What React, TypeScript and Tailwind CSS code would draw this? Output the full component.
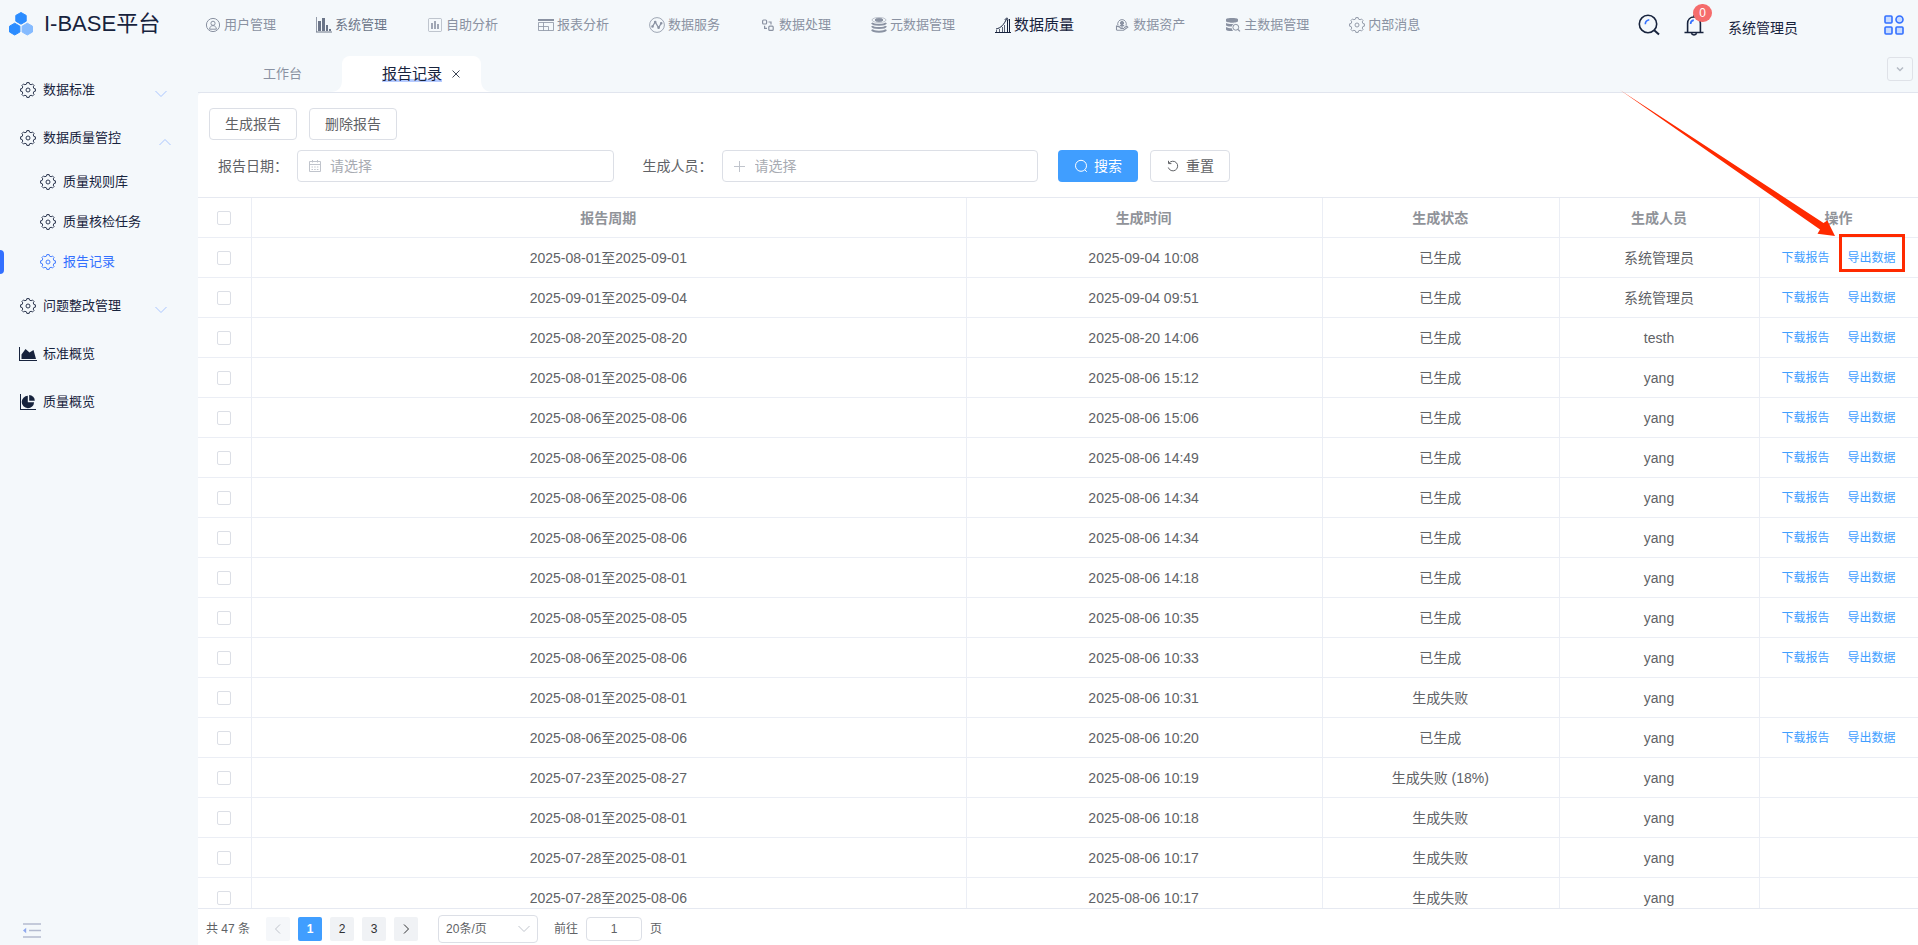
import React, { useState } from 'react';

interface IconProps {
  className?: string;
}

interface Report {
  period: string;
  time: string;
  status: string;
  user: string;
}

const REPORTS: Report[] = [
  { period: '2025-08-01至2025-09-01', time: '2025-09-04 10:08', status: '已生成', user: '系统管理员' },
  { period: '2025-09-01至2025-09-04', time: '2025-09-04 09:51', status: '已生成', user: '系统管理员' },
  { period: '2025-08-20至2025-08-20', time: '2025-08-20 14:06', status: '已生成', user: 'testh' },
  { period: '2025-08-01至2025-08-06', time: '2025-08-06 15:12', status: '已生成', user: 'yang' },
  { period: '2025-08-06至2025-08-06', time: '2025-08-06 15:06', status: '已生成', user: 'yang' },
  { period: '2025-08-06至2025-08-06', time: '2025-08-06 14:49', status: '已生成', user: 'yang' },
  { period: '2025-08-06至2025-08-06', time: '2025-08-06 14:34', status: '已生成', user: 'yang' },
  { period: '2025-08-06至2025-08-06', time: '2025-08-06 14:34', status: '已生成', user: 'yang' },
  { period: '2025-08-01至2025-08-01', time: '2025-08-06 14:18', status: '已生成', user: 'yang' },
  { period: '2025-08-05至2025-08-05', time: '2025-08-06 10:35', status: '已生成', user: 'yang' },
  { period: '2025-08-06至2025-08-06', time: '2025-08-06 10:33', status: '已生成', user: 'yang' },
  { period: '2025-08-01至2025-08-01', time: '2025-08-06 10:31', status: '生成失败', user: 'yang' },
  { period: '2025-08-06至2025-08-06', time: '2025-08-06 10:20', status: '已生成', user: 'yang' },
  { period: '2025-07-23至2025-08-27', time: '2025-08-06 10:19', status: '生成失败 (18%)', user: 'yang' },
  { period: '2025-08-01至2025-08-01', time: '2025-08-06 10:18', status: '生成失败', user: 'yang' },
  { period: '2025-07-28至2025-08-01', time: '2025-08-06 10:17', status: '生成失败', user: 'yang' },
  { period: '2025-07-28至2025-08-06', time: '2025-08-06 10:17', status: '生成失败', user: 'yang' },
];

// 8-tooth gear outline in a 16x16 box
const gearPath = () => {
  const pts: string[] = [];
  for (let i = 0; i < 8; i++) {
    [[-14, 6.1], [-9, 7.5], [9, 7.5], [14, 6.1]].forEach(([offset, r]) => {
      const a = ((i * 45 + offset) * Math.PI) / 180;
      pts.push(`${(8 + r * Math.sin(a)).toFixed(2)} ${(8 - r * Math.cos(a)).toFixed(2)}`);
    });
  }
  return `M${pts.join('L')}Z`;
};
const GEAR = gearPath();

const GearIcon: React.FC<IconProps> = ({ className = '' }) => (
  <svg className={`w-4 h-4 shrink-0 ${className}`} viewBox="0 0 16 16" fill="none" stroke="currentColor" strokeWidth=".9" strokeLinejoin="round">
    <path d={GEAR} />
    <circle cx="8" cy="8" r="2" />
  </svg>
);

const UserIcon = () => (
  <svg className="w-4 h-4" viewBox="0 0 16 16" fill="none" stroke="currentColor">
    <circle cx="8" cy="8" r="6.600" />
    <circle cx="8" cy="6.300" r="2.100" />
    <path d="M4.600 12.200c.2-2.300 1.500-3.600 3.400-3.600s3.200 1.300 3.400 3.600z" />
  </svg>
);

const BarsIcon = () => (
  <svg className="w-4 h-4" viewBox="0 0 16 16" fill="currentColor">
    <path d="M0 0h1v15H0z" opacity=".7" />
    <path d="M0 14h16v2H0z" opacity=".5" />
    <path d="M2 4h3v10H2zM6 1h3v13H6zM10 8h2v6h-2zM13 12h2v2h-2z" />
  </svg>
);

const BoxChartIcon = () => (
  <svg className="w-4 h-4" viewBox="0 0 16 16" fill="none" stroke="currentColor">
    <rect x="1.500" y="1.500" width="13" height="13" rx="1" opacity=".5" />
    <path d="M5 6v6M8 4v8M11 7v5" strokeWidth="1.600" />
  </svg>
);

const ReportIcon = () => (
  <svg className="w-4 h-4" viewBox="0 0 16 16" fill="none" stroke="currentColor">
    <path d="M0 3h16" strokeWidth="2" />
    <path d="M.5 5.500h15v8H.5zM5.500 5.500v8M.5 9.500h10v4" opacity=".8" />
  </svg>
);

const PulseIcon = () => (
  <svg className="w-4 h-4" viewBox="0 0 16 16" fill="none" stroke="currentColor">
    <circle cx="8" cy="8" r="7.400" opacity=".8" />
    <path d="M3.500 9.500 6.200 5l3.400 5.800 2.600-4.600" strokeWidth="1.300" />
    <path d="M3.500 9.500h.01M6.200 5h.01M9.600 10.800h.01M12.200 6.200h.01" strokeWidth="2.600" strokeLinecap="round" />
  </svg>
);

const FlowIcon = () => (
  <svg className="w-4 h-4" viewBox="0 0 16 16" fill="none" stroke="currentColor" strokeWidth="1.200">
    <rect x="2.600" y="3" width="4" height="4" rx="1" />
    <rect x="8.800" y="9.200" width="4.400" height="4.200" rx="1" />
    <path d="M8.500 5h2.500v2.500M4.600 8.800v2.600H7" />
  </svg>
);

const DatabaseIcon = () => (
  <svg className="w-4 h-4" viewBox="0 0 16 16" fill="none" stroke="currentColor">
    <ellipse cx="8" cy="3" rx="7" ry="2.500" opacity=".5" />
    <ellipse cx="8" cy="3" rx="4" ry="1.400" fill="currentColor" />
    <path d="M1 5.800c1 2.500 13 2.500 14 0M1 9.200c1 2.500 13 2.500 14 0M1 12.700c1 2.600 13 2.600 14 0" strokeWidth="2" />
  </svg>
);

const QualityIcon = () => (
  <svg className="w-4 h-4" viewBox="0 0 16 16" fill="none" stroke="currentColor">
    <path d="M0 15.500h16" />
    <path d="M1.500 13v2M4.500 12v3M7.500 10v5M9.500 8v7" opacity=".7" />
    <path d="M12.500 3v12M14.500 2v13" />
    <path d="M1 12C6 11 9 7.500 11.500 2M9.800 2.800 11.800.8l1.500 2.400" />
  </svg>
);

const AssetIcon = () => (
  <svg className="w-4 h-4" viewBox="0 0 16 16" fill="none" stroke="currentColor">
    <path d="M4 8.500a4.300 4.300 0 1 1 8 0" />
    <circle cx="8" cy="6" r="1.600" fill="currentColor" />
    <path d="M8 7v4M5.800 8.600h4.400M2.500 8.500v4.500M2.500 9.500c2-.5 3.500.5 4.500 2h3M2.500 13.300h7l4.300-3.200-1-1-2.800 1.700" strokeWidth="1.100" />
  </svg>
);

const MasterDataIcon = () => (
  <svg className="w-4 h-4" viewBox="0 0 16 16" fill="none" stroke="currentColor">
    <path d="M1 2.500C1 .6 13 .6 13 2.500v1.700c0 1.900-12 1.900-12 0zM1 6c2 1.200 6 1.300 8 .8-1.200.7-2 1.700-2.200 2.800C4 9.600 1 9.200 1 8zM1 10c1.500 1 3.500 1.300 5.700 1.300.2 1.200.7 2 1.400 2.600C5 14.200 1 13.800 1 12.500z" fill="currentColor" stroke="none" />
    <circle cx="10.800" cy="10.300" r="2.900" />
    <path d="m12.900 12.400 2 2" strokeWidth="1.300" />
  </svg>
);

const AreaIcon = () => (
  <svg className="w-[18px] h-4 -ml-px -mr-px shrink-0" viewBox="0 0 18 16" fill="currentColor">
    <path d="M0 1h1v13h17v1H0z" />
    <path d="M2.500 13V8.500L6.500 3l4 3.500L14.500 4 17 13z" />
  </svg>
);

const PieIcon = () => (
  <svg className="w-4 h-4 shrink-0" viewBox="0 0 16 16" fill="currentColor">
    <path d="M0 0h1v15h15v1H0z" />
    <path d="M7.800 1.800v6.400h6.300A6.200 6.200 0 1 1 7.800 1.800z" />
    <path d="M9.200 1a5.800 5.800 0 0 1 5.600 5.800H9.200z" />
  </svg>
);

const Chevron: React.FC<IconProps & { up?: boolean }> = ({ className = '', up }) => (
  <svg className={`w-3 h-3 shrink-0 ${className}`} viewBox="0 0 12 12" fill="none" stroke="currentColor">
    <path d={up ? 'M.5 9 6 3.500 11.500 9' : 'M.5 3 6 8.500 11.500 3'} />
  </svg>
);

const NAV = [
  { label: '用户管理', icon: <UserIcon /> },
  { label: '系统管理', icon: <BarsIcon />, dark: true },
  { label: '自助分析', icon: <BoxChartIcon /> },
  { label: '报表分析', icon: <ReportIcon /> },
  { label: '数据服务', icon: <PulseIcon /> },
  { label: '数据处理', icon: <FlowIcon /> },
  { label: '元数据管理', icon: <DatabaseIcon /> },
  { label: '数据质量', icon: <QualityIcon />, active: true },
  { label: '数据资产', icon: <AssetIcon /> },
  { label: '主数据管理', icon: <MasterDataIcon /> },
  { label: '内部消息', icon: <GearIcon /> },
];

const Sidebar = () => {
  const item = 'flex items-center gap-[7px] h-12 pl-5 w-full';
  const sub = 'relative flex items-center gap-[7px] h-10 pl-10 w-full';
  return (
    <aside className="w-[198px] shrink-0 flex flex-col text-[13px] text-[#17233d]">
      <div className="flex items-center gap-[11px] h-12 pl-[9px] mb-[18px]">
        <svg className="w-6 h-6 shrink-0" viewBox="0 0 24 24">
          <path d="M12 0.500 17.200 3.400v5.800L12 12.200 6.800 9.200V3.400z" fill="#2b8cff" stroke="#2b8cff" strokeLinejoin="round" />
          <path d="M5.700 11.200 10.900 14.200v5.800L5.700 23 .5 20v-5.800z" fill="#2b8cff" stroke="#2b8cff" strokeLinejoin="round" />
          <path d="M18.300 11.200 23.500 14.200v5.800L18.300 23l-5.200-3v-5.800z" fill="#85bbff" stroke="#85bbff" strokeLinejoin="round" />
        </svg>
        <h1 className="text-[22px] leading-7 whitespace-nowrap">I-BASE平台</h1>
      </div>
      <nav className="flex-1">
        <button type="button" className={item}>
          <GearIcon />数据标准
          <Chevron className="ml-auto mr-[31px] mt-2 text-[#a9c5ff]" />
        </button>
        <button type="button" className={item}>
          <GearIcon />数据质量管控
          <Chevron up className="ml-auto mr-[27px] mt-2 text-[#a9c5ff]" />
        </button>
        <a href="#rules" className={sub}><GearIcon />质量规则库</a>
        <a href="#tasks" className={sub}><GearIcon />质量核检任务</a>
        <a href="#reports" className={`${sub} text-[#3370ff]`}>
          <span className="absolute left-0 top-2 w-1 h-6 rounded-r bg-[#3370ff]" />
          <GearIcon />报告记录
        </a>
        <button type="button" className={item}>
          <GearIcon />问题整改管理
          <Chevron className="ml-auto mr-[31px] mt-2 text-[#a9c5ff]" />
        </button>
        <a href="#standard" className={item}><AreaIcon />标准概览</a>
        <a href="#quality" className={item}><PieIcon />质量概览</a>
      </nav>
      <button type="button" aria-label="收起菜单" className="self-start ml-[23px] mb-[7px]">
        <svg className="block w-[18px] h-4" viewBox="0 0 18 16" fill="none" stroke="#b4bbd0" strokeWidth="1.500">
          <path d="M0 2h18M6 8.500h12M0 15h18" />
          <path d="M3.200 5.800v5.400L0 8.500z" fill="#8fa8ee" stroke="none" />
        </svg>
      </button>
    </aside>
  );
};

const TopBar = () => (
  <header className="flex items-center h-[50px] pl-[7px] pr-[14px]">
    <nav className="flex items-center gap-10 text-[13px] whitespace-nowrap text-[#8a92a2]">
      {NAV.map(n => (
        <a
          key={n.label}
          href="#nav"
          className={`flex items-center gap-[3px] ${n.active ? 'text-[15px] text-[#17233d]' : ''} ${n.dark ? 'text-[#6b7588]' : ''}`}
        >
          {n.icon}
          {n.label}
        </a>
      ))}
    </nav>
    <div className="ml-auto flex items-center">
      <button type="button" aria-label="搜索菜单" className="mr-6">
        <svg className="w-[22px] h-[22px]" viewBox="0 0 22 22" fill="none" stroke="#17233d" strokeWidth="1.600">
          <circle cx="10" cy="10" r="8.700" />
          <path d="m16.200 16.200 4.800 4.300" strokeWidth="2" />
          <path d="M7.300 10.300c0-2.200 1.700-4.200 4-4.600" stroke="#3370ff" />
        </svg>
      </button>
      <button type="button" aria-label="通知" className="relative mr-6">
        <svg className="w-5 h-[22px]" viewBox="0 0 20 22" fill="none" stroke="#17233d" strokeWidth="1.600">
          <path d="M.5 18.500h19M3.600 18.500V9.500C3.600 5.500 6.300 3 10 3s6.400 2.500 6.400 6.500v9M10 3V.8" />
          <path d="M7.500 19.200c.4 2.400 4.600 2.400 5 0" />
          <path d="M6.600 10c0-2.200 1.200-3.600 3.200-3.900" stroke="#3370ff" />
        </svg>
        <span className="absolute -top-[10px] left-[9px] w-[19px] h-[18px] rounded-full bg-[#f56c6c] text-white text-xs leading-[18px] text-center">0</span>
      </button>
      <span className="text-sm text-[#17233d] mt-[6px] mr-[86px]">系统管理员</span>
      <button type="button" aria-label="应用">
        <svg className="w-5 h-5" viewBox="0 0 20 20" fill="#c9dcff" stroke="#3370ff" strokeWidth="1.600">
          <rect x="1" y="1" width="7" height="7" rx="1" />
          <circle cx="15.500" cy="4.500" r="3.500" />
          <rect x="1" y="12" width="7" height="7" rx="1" />
          <rect x="12" y="12" width="7" height="7" rx="1" />
        </svg>
      </button>
    </div>
  </header>
);

const Tabs = () => (
  <div className="flex items-end h-[43px] border-b border-[#e1e5ee] pr-[5px]">
    <button type="button" className="w-[144px] h-9 pl-[65px] text-left text-[13px] text-[#8a92a2]">工作台</button>
    <div className="relative flex items-center w-[139px] h-9 pl-10 rounded-t-lg bg-white">
      <svg className="absolute -left-3 bottom-0 w-3 h-3" viewBox="0 0 12 12" fill="#fff"><path d="M12 0v12H0C8 12 12 8 12 0z" /></svg>
      <svg className="absolute -right-3 bottom-0 w-3 h-3" viewBox="0 0 12 12" fill="#fff"><path d="M0 0v12h12C4 12 0 8 0 0z" /></svg>
      <button
        type="button"
        className="text-[15px] leading-5 text-[#17233d] whitespace-nowrap underline decoration-[#b5caff] decoration-3 underline-offset-0 [text-decoration-skip-ink:none]"
      >
        报告记录
      </button>
      <button type="button" aria-label="关闭" className="ml-[10px]">
        <svg className="w-2 h-2" viewBox="0 0 8 8" stroke="#3d4554"><path d="m.5.500 7 7M7.500.500l-7 7" /></svg>
      </button>
    </div>
    <button type="button" aria-label="更多标签" className="ml-auto mb-[11px] flex items-center justify-center w-[26px] h-6 rounded-[3px] border border-[#dfe2e8] text-[#b5bac4]">
      <svg className="w-2 h-2" viewBox="0 0 8 8" fill="none" stroke="currentColor" strokeWidth="1.500"><path d="m1 2.500 3 3 3-3" /></svg>
    </button>
  </div>
);

const Toolbar = () => {
  const btn = 'h-8 border border-[#dcdfe6] rounded bg-white text-[#606266]';
  const field = 'flex-1 min-w-0 flex items-center gap-2 h-8 px-[10px] border border-[#dcdfe6] rounded text-[#c0c4cc]';
  const input = 'flex-1 min-w-0 outline-none bg-transparent placeholder:text-[#a8abb2]';
  return (
    <div className="px-[11px] py-[15px] text-sm text-[#606266]">
      <div className="flex gap-3 mb-[10px]">
        <button type="button" className={`${btn} w-[88px]`}>生成报告</button>
        <button type="button" className={`${btn} w-[88px]`}>删除报告</button>
      </div>
      <form className="flex items-center" onSubmit={e => e.preventDefault()}>
        <div className="w-1/4 pr-5 flex items-center">
          <label htmlFor="date" className="w-22 text-center">报告日期：</label>
          <div className={field}>
            <svg className="w-[14px] h-[14px] shrink-0" viewBox="0 0 14 14" fill="none" stroke="currentColor">
              <path d="M1.500 2.500h11v10h-11zM1.500 5.500h11M4.500 1v2.500M9.500 1v2.500" />
              <path d="M3.500 8h7M3.500 10.500h7" strokeDasharray="1.500 1.200" />
            </svg>
            <input id="date" className={input} placeholder="请选择" />
          </div>
        </div>
        <div className="w-1/4 pr-5 flex items-center">
          <label htmlFor="creator" className="w-22 text-center">生成人员：</label>
          <div className={field}>
            <svg className="w-[14px] h-[14px] shrink-0" viewBox="0 0 14 14" stroke="currentColor"><path d="M1 7.500h11M6.500 2v11" /></svg>
            <input id="creator" className={input} placeholder="请选择" />
          </div>
        </div>
        <button type="submit" className="flex items-center justify-center gap-[6px] w-20 h-8 mr-3 rounded bg-[#409eff] text-white">
          <svg className="w-[14px] h-[14px]" viewBox="0 0 14 14" fill="none" stroke="currentColor"><circle cx="7" cy="6.800" r="5.500" /><path d="m10.800 10.800 2 2" /></svg>
          搜索
        </button>
        <button type="reset" className={`${btn} flex items-center justify-center gap-[6px] w-20`}>
          <svg className="w-[14px] h-[14px]" viewBox="0 0 14 14" fill="none" stroke="currentColor"><path d="M3 4.200A4.800 4.800 0 1 1 2.300 8.500M2.500 1.800v2.800h2.900" /></svg>
          重置
        </button>
      </form>
    </div>
  );
};

const CHECKBOX = 'block mx-auto appearance-none w-[14px] h-[14px] border border-[#dcdfe6] rounded-[2px] bg-white checked:bg-[#409eff]';
const CELL = 'h-10 p-0 pr-px border-b border-r border-[#ebeef5] last:border-r-0';

const ReportTable = () => (
  <div className="flex-1 min-h-0 overflow-hidden border-t border-b border-[#e6e9f1]">
    <table className="w-full table-fixed border-separate border-spacing-0 text-sm text-center text-[#606266]">
      <colgroup>
        <col className="w-[54px]" />
        <col />
        <col className="w-[20.7%]" />
        <col className="w-[13.8%]" />
        <col className="w-[200px]" />
        <col className="w-[158px]" />
      </colgroup>
      <thead>
        <tr className="text-[#909399]">
          <th className={CELL}><input type="checkbox" aria-label="全选" className={CHECKBOX} /></th>
          <th className={CELL}>报告周期</th>
          <th className={CELL}>生成时间</th>
          <th className={CELL}>生成状态</th>
          <th className={CELL}>生成人员</th>
          <th className={CELL}>操作</th>
        </tr>
      </thead>
      <tbody>
        {REPORTS.map((r, i) => (
          <tr key={i}>
            <td className={CELL}><input type="checkbox" aria-label={r.period} className={CHECKBOX} /></td>
            <td className={CELL}>{r.period}</td>
            <td className={CELL}>{r.time}</td>
            <td className={CELL}>{r.status}</td>
            <td className={CELL}>{r.user}</td>
            <td className={CELL}>
              {r.status === '已生成' && (
                <div className="flex justify-center gap-[18px] text-xs text-[#409eff]">
                  <a href="#download">下载报告</a>
                  <a href="#export">导出数据</a>
                </div>
              )}
            </td>
          </tr>
        ))}
      </tbody>
    </table>
  </div>
);

const Pagination = () => {
  const [page, setPage] = useState(1);
  const btn = 'flex items-center justify-center w-6 h-6 rounded-[2px]';
  return (
    <footer className="flex items-center h-9 pl-2 pt-1 text-xs text-[#606266]">
      <span className="mr-4">共 47 条</span>
      <div className="flex gap-2 mr-5">
        <button type="button" aria-label="上一页" disabled={page === 1} className={`${btn} bg-[#f5f7fa] text-[#c0c4cc]`}>
          <svg className="w-3 h-3" viewBox="0 0 12 12" fill="none" stroke="currentColor"><path d="M8 1.500 3.500 6 8 10.500" /></svg>
        </button>
        {[1, 2, 3].map(p => (
          <button
            key={p}
            type="button"
            onClick={() => setPage(p)}
            className={`${btn} ${p === page ? 'bg-[#409eff] text-white font-bold' : 'bg-[#f0f2f5] text-[#303133]'}`}
          >
            {p}
          </button>
        ))}
        <button type="button" aria-label="下一页" className={`${btn} bg-[#f0f2f5] text-[#303133]`}>
          <svg className="w-3 h-3" viewBox="0 0 12 12" fill="none" stroke="currentColor"><path d="M4 1.500 8.500 6 4 10.500" /></svg>
        </button>
      </div>
      <div className="relative mr-4">
        <select aria-label="每页条数" className="block appearance-none w-[100px] h-7 pl-[7px] border border-[#dcdfe6] rounded bg-white">
          <option>20条/页</option>
        </select>
        <Chevron className="absolute right-2 top-2 text-[#c0c4cc] pointer-events-none" />
      </div>
      <label htmlFor="jump" className="mr-2">前往</label>
      <input id="jump" defaultValue="1" className="w-14 h-6 mr-2 border border-[#dcdfe6] rounded text-center" />
      <span>页</span>
    </footer>
  );
};

// Red arrow and frame pointing at the first export link
const Annotation = () => (
  <svg className="absolute right-3 top-[90px] w-[286px] h-[183px] pointer-events-none" viewBox="0 0 286 183">
    <path d="M0 0 203.500 133 207.300 130.500 215 146 197.500 143.700 200 139.500z" fill="#ff2a00" />
    <rect x="220.500" y="145.500" width="63" height="35" fill="none" stroke="#ff2a00" strokeWidth="3" />
  </svg>
);

export default function App() {
  return (
    <div className="relative flex h-screen overflow-hidden bg-[#f4f8fb] font-['Liberation_Sans','Noto_Sans_CJK_SC',sans-serif]">
      <Sidebar />
      <div className="flex-1 min-w-0 flex flex-col">
        <TopBar />
        <Tabs />
        <main className="flex-1 min-h-0 flex flex-col bg-white rounded-tl">
          <Toolbar />
          <ReportTable />
          <Pagination />
        </main>
      </div>
      <Annotation />
    </div>
  );
}
